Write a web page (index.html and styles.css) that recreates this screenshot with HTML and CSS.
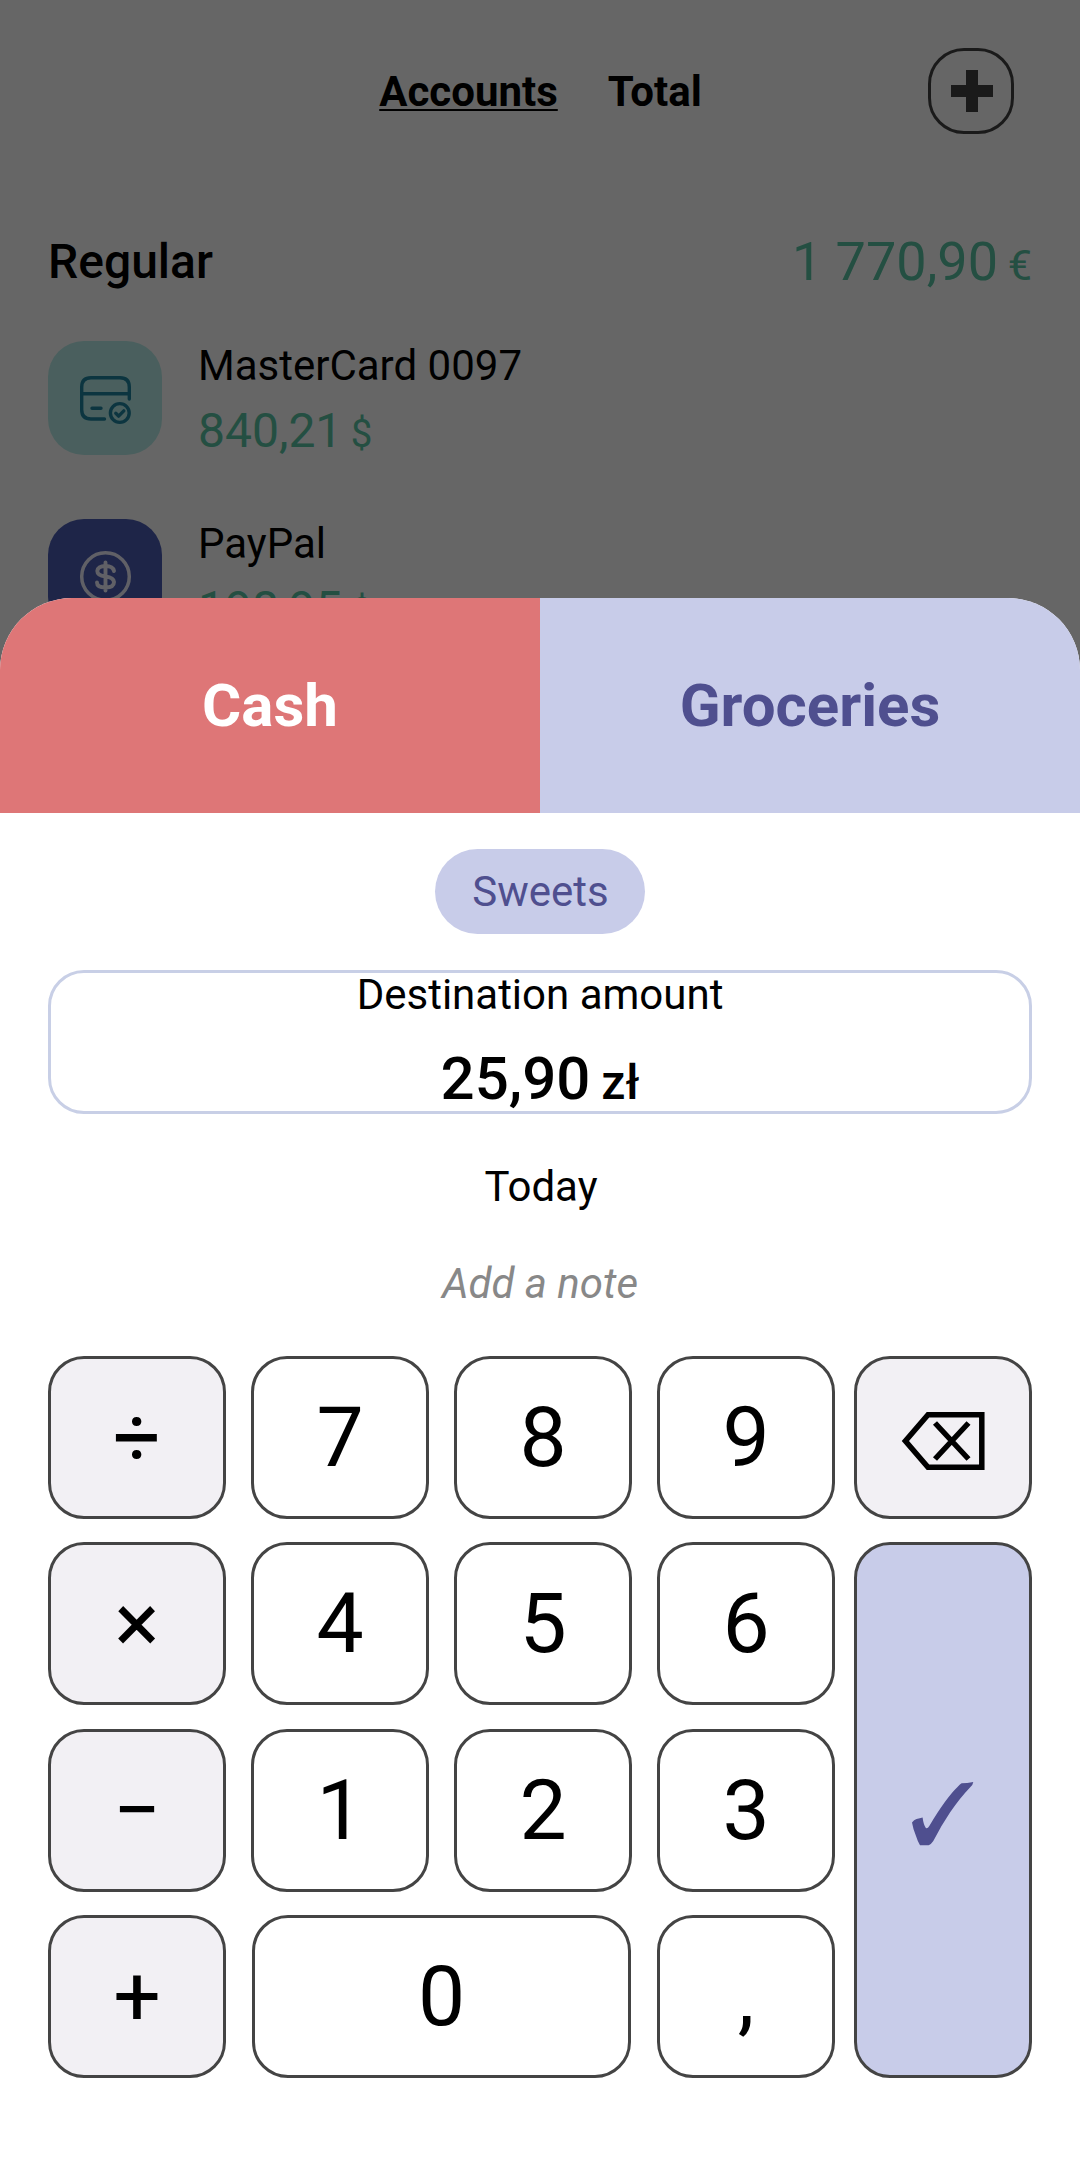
FILE: index.html
```html
<!DOCTYPE html>
<html lang="en">
<head>
<meta charset="utf-8">
<title>Accounts</title>
<link rel="stylesheet" href="styles.css">
</head>
<body>
<div class="app">
  <main class="accounts">
    <header class="topbar">
      <nav class="tabs">
        <span class="tab tab-active">Accounts</span>
        <span class="tab">Total</span>
      </nav>
      <button class="add" aria-label="Add account">
        <svg width="42" height="42" viewBox="0 0 42 42"><path d="M15 0h12v15h15v12H27v15H15V27H0V15h15z" fill="#434343"/></svg>
      </button>
    </header>
    <div class="group">
      <h2 class="group-name">Regular</h2>
      <div class="group-total">1 770,90<span class="cur"> €</span></div>
    </div>
    <div class="account">
      <div class="badge badge-teal">
        <svg width="54" height="54" viewBox="0 0 54 54" fill="none" stroke="#1e84a0" stroke-width="3.4" stroke-linecap="round" stroke-linejoin="round">
          <path d="M51.300 28V16Q51.300 6.700 42 6.700H13Q3.700 6.700 3.700 16V38.700Q3.700 48 13 48H26.500M3.700 22.700H51.300M14 37.200H23"/>
          <circle cx="41.800" cy="42" r="9.400"/>
          <path d="M37.800 42.300l2.800 2.800 5.200-5.200"/>
        </svg>
      </div>
      <div class="details">
        <div class="name">MasterCard 0097</div>
        <div class="balance">840,21<span class="cur"> $</span></div>
      </div>
    </div>
    <div class="account">
      <div class="badge badge-indigo">
        <svg width="54" height="54" viewBox="0 0 54 54" fill="none" stroke="#f0f0ff" stroke-width="3.500" stroke-linecap="round" stroke-linejoin="round">
          <circle cx="27.500" cy="27.500" r="23.800"/>
          <path stroke-width="3.900" d="M27.500 13.500V41.500M36 22Q35 17 27.500 17T19.300 22Q19.300 26.500 27.500 27.500T36 33Q36 38.500 27.500 38.500T19 33.500"/>
        </svg>
      </div>
      <div class="details">
        <div class="name">PayPal</div>
        <div class="balance">198,95<span class="cur"> $</span></div>
      </div>
    </div>
  </main>
  <div class="backdrop"></div>
  <section class="sheet">
    <div class="ends">
      <div class="end end-from">Cash</div>
      <div class="end end-to">Groceries</div>
    </div>
    <div class="form">
      <div class="chip">Sweets</div>
      <div class="amount">
        <div class="amount-label">Destination amount</div>
        <div class="amount-value">25,90<span class="cur"> zł</span></div>
      </div>
      <div class="date">Today</div>
      <div class="note">Add a note</div>
      <div class="pad">
        <div class="keys">
          <button class="key key-op">÷</button>
          <button class="key">7</button>
          <button class="key">8</button>
          <button class="key">9</button>
          <button class="key key-op">×</button>
          <button class="key">4</button>
          <button class="key">5</button>
          <button class="key">6</button>
          <button class="key key-op">−</button>
          <button class="key">1</button>
          <button class="key">2</button>
          <button class="key">3</button>
          <button class="key key-op">+</button>
          <button class="key key-zero">0</button>
          <button class="key">,</button>
        </div>
        <div class="actions">
          <button class="key key-op key-back" aria-label="Backspace">
            <svg width="84" height="60" viewBox="0 0 84 60" fill="none" stroke="#000" stroke-width="5.500">
              <path d="M27 3.800H80.800V56.200H27L4.400 30z"/>
              <path d="M34 12L67.500 48M67.500 12L34 48"/>
            </svg>
          </button>
          <button class="key key-ok" aria-label="Confirm">
            <svg width="62" height="64" viewBox="0 0 62 64"><path d="M0 40.600Q2 37.600 4.500 37Q8 36.500 10.600 35.600Q11.500 43 14 46.300Q16 46.500 17.300 44Q34 16 46 4.600Q48 2 49.600 1.300Q55 1.200 61.300 0Q61 3 58 5.600Q48 16 38 30.600Q29 44 21.300 59Q19 62.500 16.600 63.300H8Q5.500 59 4 54Q1 47 0 40.600z" fill="#4f4f8f"/></svg>
          </button>
        </div>
      </div>
    </div>
  </section>
</div>
</body>
</html>
```
FILE: styles.css
```css
* { box-sizing: border-box; }
body {
  margin: 0;
  background: #fff;
  color: #000;
  font-family: Roboto, "Noto Sans", sans-serif;
  font-size: 42px;
}
button {
  padding: 0;
  font: inherit;
  color: inherit;
}
svg { display: block; }
.app {
  position: relative;
  width: 1080px;
  height: 2168px;
  overflow: hidden;
}
.accounts { padding: 0 48px; }
.topbar {
  display: grid;
  grid-template-columns: 1fr auto 1fr;
  align-items: center;
  height: 182px;
}
.tabs {
  grid-column: 2;
  display: flex;
  gap: 50px;
  padding-left: 1px;
  font-weight: 700;
}
.tab-active {
  text-decoration: underline;
  text-decoration-thickness: 2px;
  text-underline-offset: 3px;
}
.add {
  display: flex;
  align-items: center;
  justify-content: center;
  justify-self: end;
  width: 86px;
  height: 86px;
  margin-right: 18px;
  padding-left: 2px;
  border: 3px solid #434343;
  border-radius: 36px;
  background: none;
}
.group {
  display: flex;
  justify-content: space-between;
  align-items: center;
  height: 159px;
}
.group-name {
  margin: 0;
  font-size: 48px;
  font-weight: 500;
}
.group-total {
  font-size: 54px;
  color: #5bc5a5;
}
.cur {
  margin-left: -1px;
  font-size: .8em;
}
.account {
  display: flex;
  gap: 36px;
  height: 178px;
}
.badge {
  display: flex;
  align-items: center;
  justify-content: center;
  width: 114px;
  height: 114px;
  border-radius: 36px;
}
.badge-teal { background: #b9eeea; }
.badge-indigo { background: #4b5cb4; }
.name { line-height: 49px; }
.balance {
  margin-top: 13px;
  font-size: 48px;
  line-height: 56px;
  color: #5bc5a5;
}
.backdrop {
  position: absolute;
  inset: 0;
  background: rgba(0, 0, 0, .6);
}
.sheet {
  position: absolute;
  left: 0;
  right: 0;
  top: 598px;
  bottom: 0;
  overflow: hidden;
  border-radius: 72px 72px 0 0;
  background: #fff;
}
.ends {
  display: grid;
  grid-template-columns: 1fr 1fr;
  height: 215px;
}
.end {
  display: flex;
  align-items: center;
  justify-content: center;
  font-size: 60px;
  font-weight: 700;
}
.end-from { background: #de7677; color: #fff; }
.end-to { background: #c8cce9; color: #4f4f8f; }
.form {
  display: flex;
  flex-direction: column;
  align-items: center;
  padding: 36px 48px 0;
}
.chip {
  height: 85px;
  padding: 0 36px 0 37px;
  border-radius: 43px;
  background: #c8cce9;
  color: #4f4f8f;
  line-height: 85px;
}
.amount {
  width: 100%;
  height: 144px;
  margin-top: 36px;
  border: 3px solid #c8cfe6;
  border-radius: 36px;
  text-align: center;
}
.amount-label { line-height: 44px; }
.amount-value {
  margin-top: 30px;
  font-size: 60px;
  font-weight: 500;
  line-height: 64px;
}
.date {
  margin-top: 48px;
  padding-left: 2px;
  line-height: 49px;
}
.note {
  margin-top: 48px;
  line-height: 49px;
  font-style: italic;
  color: #888;
}
.pad {
  display: flex;
  justify-content: space-between;
  width: 100%;
  height: 722px;
  margin-top: 48px;
}
.keys {
  display: grid;
  grid-template-columns: repeat(4, 178px);
  grid-template-rows: repeat(4, 163px);
  gap: 23.300px 25px;
}
.actions {
  display: grid;
  grid-template-rows: 163px 1fr;
  gap: 23.300px;
  width: 178px;
}
.key {
  display: flex;
  align-items: center;
  justify-content: center;
  border: 3px solid #444;
  border-radius: 36px;
  background: #fff;
  font-size: 84px;
}
.key-op { background: #f2f0f4; }
.key-zero {
  grid-column: span 2;
  margin: 0 1px;
}
.key-back { padding-top: 6px; }
.key-ok {
  padding-top: 8px;
  background: #c8cce9;
}
```
